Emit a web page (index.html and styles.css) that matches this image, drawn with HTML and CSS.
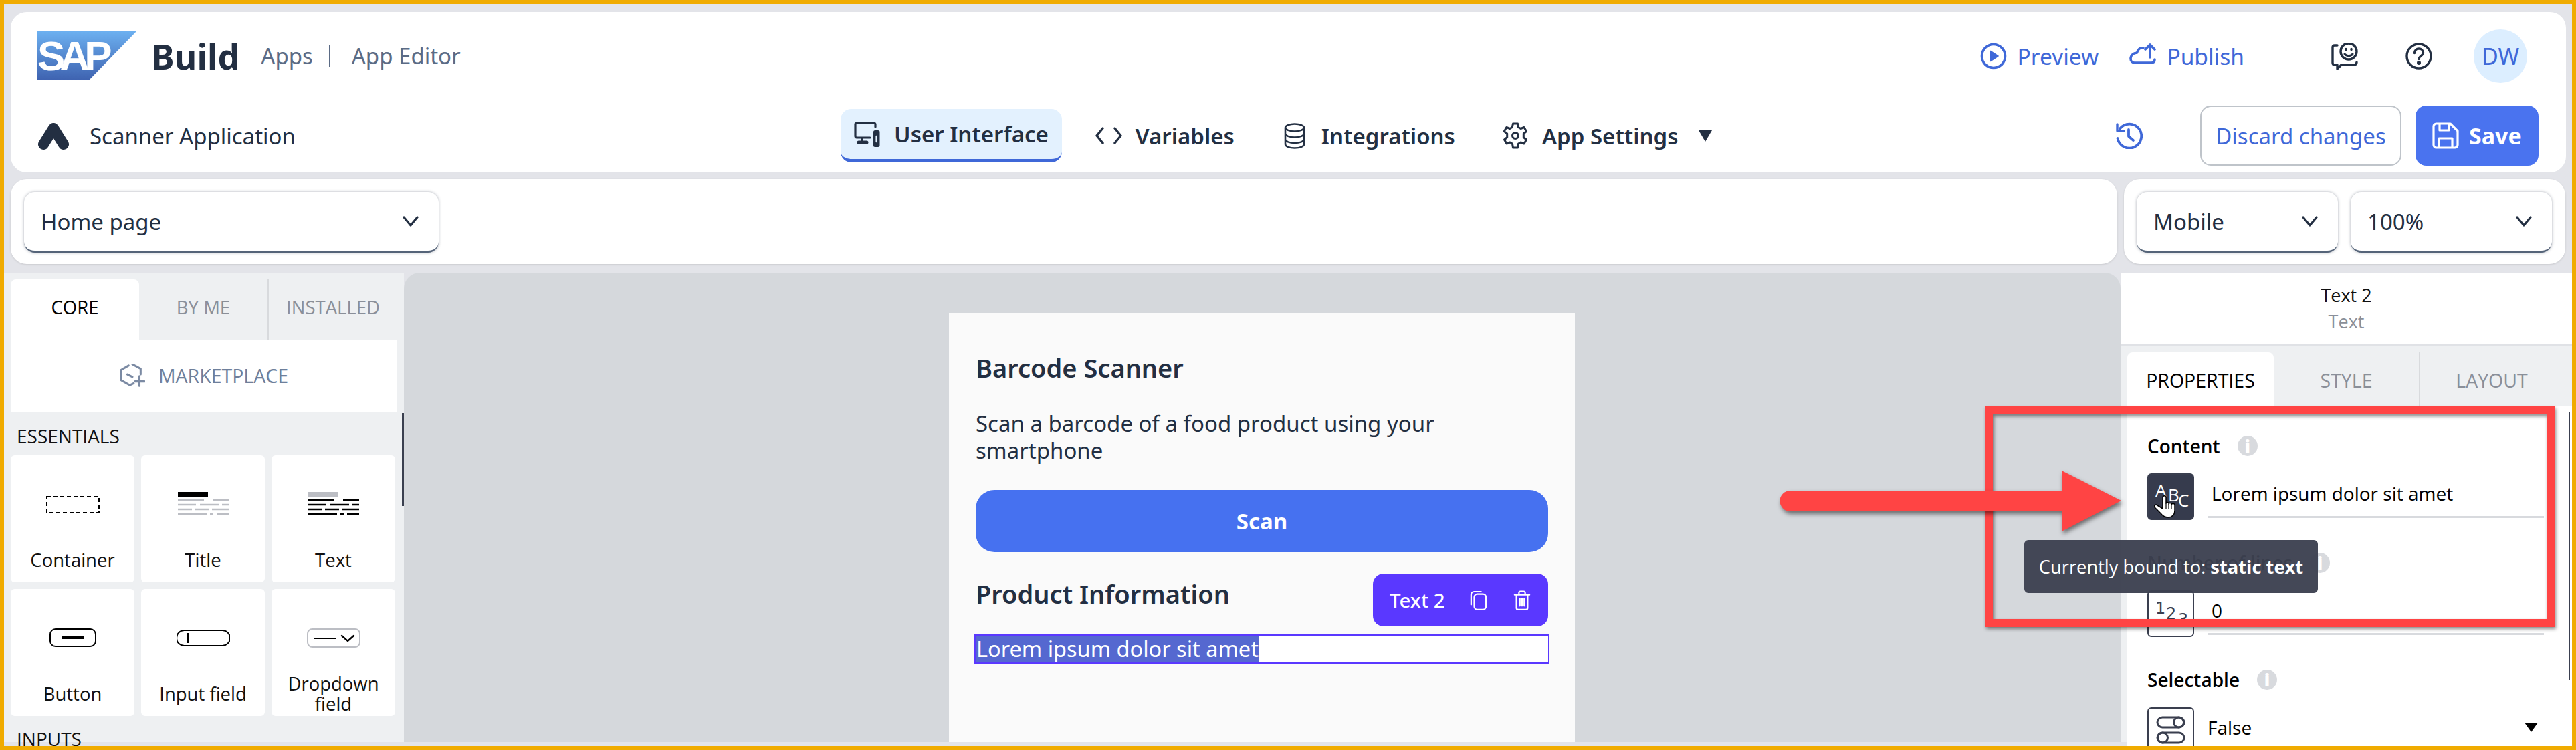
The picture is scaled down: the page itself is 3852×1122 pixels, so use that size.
FILE: index.html
```html
<!DOCTYPE html>
<html lang="en">
<head>
    <meta charset="UTF-8">
    <title>SAP Build Apps - App Editor</title>
    <link rel="stylesheet" href="styles.css">
</head>
<body>
<div class="frame">

    <!-- Header -->
    <header class="header">
        <div class="header-top">
            <div class="sap-logo"><span>SAP</span></div>
            <span class="brand">Build</span>
            <span class="crumb">Apps</span>
            <span class="crumb-sep"></span>
            <span class="crumb">App Editor</span>
            <div class="header-actions">
                <a class="link-action">
                    <svg class="icon-40" viewBox="0 0 40 40" fill="none" stroke="#3f68d8" stroke-width="3.6"><circle cx="20" cy="20" r="17.5"/><path d="M15.5 12.5v15L27 20z" fill="#3f68d8" stroke-width="1.5" stroke-linejoin="round"/></svg>
                    Preview
                </a>
                <a class="link-action publish">
                    <svg class="icon-40" viewBox="0 0 40 40" fill="none" stroke="#3f68d8" stroke-width="3.6" stroke-linecap="round" stroke-linejoin="round"><path d="M21 8c-5-1-8 2-9.500 7C6 15.500 2 19 2 24c0 4 3 6 6 6h25c4 0 5-2 5-5"/><path d="M31 22V3M24 10l7-7 7 7"/></svg>
                    Publish
                </a>
                <svg class="icon-40 chat" viewBox="0 0 40 40" fill="none" stroke="#232f42" stroke-width="3.4" stroke-linecap="round" stroke-linejoin="round"><path d="M9 4H5C3 4 2 5 2 7v23c0 2 1 3 3 3h4v6l6-6h19c3 0 4-2 4-4"/><circle cx="26" cy="13" r="12"/><path d="M20 17c3 3.500 9 3.500 12 0" stroke-width="3"/><path d="M22 9.500v1M30 9.500v1"/></svg>
                <svg class="icon-40 help" viewBox="0 0 40 40" fill="none" stroke="#232f42" stroke-width="3.4" stroke-linecap="round"><circle cx="20" cy="20" r="18"/><path d="M13.500 15.500c0-4 3-6.500 6.500-6.500s6.500 2.500 6.500 6c0 4.500-6.500 5-6.500 9.500"/><circle cx="20" cy="30" r="1.300" fill="#232f42"/></svg>
                <div class="avatar">DW</div>
            </div>
        </div>
        <div class="header-bottom">
            <div class="app-name">
                <svg class="app-logo" viewBox="0 0 48 42" fill="none" stroke="#232f42" stroke-width="16" stroke-linecap="round"><path d="M24 10L9 34M24 10l15 24"/></svg>
                Scanner Application
            </div>
            <nav class="nav">
                <a class="nav-item active">
                    <svg class="icon-40" viewBox="0 0 40 40" fill="none" stroke="#232f42" stroke-width="3.2" stroke-linecap="round" stroke-linejoin="round"><path d="M32 9V5c0-1-1-2-2-2H5C3 3 2 4 2 5v18c0 1 1 2 2 2h20"/><path d="M12 26v5"/><path d="M7 32h12" stroke-width="5"/><rect x="30" y="15" width="7.500" height="23" rx="1.500" fill="#232f42" stroke-width="2"/><path d="M33.700 23v8" stroke="#e3f1fe" stroke-width="2.500"/></svg>
                    User Interface
                </a>
                <a class="nav-item">
                    <svg class="icon-40" viewBox="0 0 40 40" fill="none" stroke="#232f42" stroke-width="3.4" stroke-linecap="round" stroke-linejoin="round"><path d="M11 9L2 20l9 11M29 9l9 11-9 11"/></svg>
                    Variables
                </a>
                <a class="nav-item">
                    <svg class="icon-40" viewBox="0 0 40 40" fill="none" stroke="#232f42" stroke-width="2.600"><ellipse cx="20" cy="8" rx="14" ry="5.500"/><path d="M6 8v25c0 3 6 5.500 14 5.500s14-2.500 14-5.500V8M6 17c0 3 6 5.500 14 5.500S34 20 34 17M6 25.500c0 3 6 5.500 14 5.500s14-2.500 14-5.500"/></svg>
                    Integrations
                </a>
                <a class="nav-item">
                    <svg class="icon-40" viewBox="0 0 40 40" fill="none" stroke="#232f42" stroke-width="3" stroke-linejoin="round"><path d="M16.500 2h7l1 5.500 3.500 2 5-2 3.500 6-4.200 3.500v5.500l4.200 3.500-3.500 6-5-2-3.500 2-1 6h-7l-1-6-3.500-2-5 2-3.500-6 4.200-3.500V17L3.300 13.500l3.500-6 5 2 3.500-2z"/><circle cx="20" cy="20" r="4.500"/></svg>
                    App Settings
                </a>
                <span class="nav-caret"></span>
            </nav>
            <div class="save-group">
                <svg class="icon-40 history" viewBox="0 0 40 40" fill="none" stroke="#3f68d8" stroke-width="3.8" stroke-linecap="round" stroke-linejoin="round"><path d="M6 9.500A18 18 0 1 1 2.500 24"/><path d="M2 3v10h10" stroke-width="3.400"/><path d="M19 11v10l7 6"/></svg>
                <button class="btn-discard">Discard changes</button>
                <button class="btn-save">
                    <svg class="icon-40" viewBox="0 0 40 40" fill="none" stroke="#fff" stroke-width="3.200" stroke-linejoin="round"><path d="M6 2h21l11 11v21c0 2-2 4-4 4H6c-2 0-4-2-4-4V6c0-2 2-4 4-4z"/><path d="M11 2v10h14V2M10 38V24h20v14"/></svg>
                    Save
                </button>
            </div>
        </div>
    </header>

    <!-- Thanh chọn trang -->
    <div class="toolbar-row">
        <div class="toolbar page-bar">
            <div class="select select-page">Home page<svg class="chevron" viewBox="0 0 24 16" fill="none" stroke="#232f42" stroke-width="3.200" stroke-linecap="round" stroke-linejoin="round"><path d="M2 2l10 12L22 2"/></svg></div>
        </div>
        <div class="toolbar view-bar">
            <div class="select select-view">Mobile<svg class="chevron" viewBox="0 0 24 16" fill="none" stroke="#232f42" stroke-width="3.200" stroke-linecap="round" stroke-linejoin="round"><path d="M2 2l10 12L22 2"/></svg></div>
            <div class="select select-view">100%<svg class="chevron" viewBox="0 0 24 16" fill="none" stroke="#232f42" stroke-width="3.200" stroke-linecap="round" stroke-linejoin="round"><path d="M2 2l10 12L22 2"/></svg></div>
        </div>
    </div>

    <div class="main">
        <!-- Cột trái -->
        <aside class="left-panel">
            <div class="left-tabs">
                <div class="tab tab-active">CORE</div>
                <div class="tab tab-mid">BY ME</div>
                <div class="tab">INSTALLED</div>
            </div>
            <div class="marketplace">
                <svg class="market-icon" viewBox="0 0 40 38" fill="none" stroke="#7b8aa3" stroke-width="3.200" stroke-linecap="round" stroke-linejoin="round"><path d="M14 3L2 10v16l14 8 6-3"/><path d="M20 1l13 7v9"/><path d="M12 17l8 4"/><path d="M31 20v15M24 28h15" stroke-width="3.400"/></svg>
                MARKETPLACE
            </div>
            <div class="section-title">ESSENTIALS</div>
            <div class="card-grid">
                <div class="card">
                    <svg class="card-icon" viewBox="0 0 80 40"><rect x="1" y="8" width="78" height="24" fill="none" stroke="#000" stroke-width="2" stroke-dasharray="6 4"/></svg>
                    <div class="card-label">Container</div>
                </div>
                <div class="card">
                    <svg class="card-icon" viewBox="0 0 80 40" fill="none" stroke="#bcbec4" stroke-width="2.400"><rect x="2" y="1" width="45" height="7" fill="#000" stroke="none"/><path d="M2 13h39M54 13h24M2 20h27M35 20h28M68 20h10M2 27h21M27 27h21M53 27h25M2 34h43M50 34h5M60 34h18"/></svg>
                    <div class="card-label">Title</div>
                </div>
                <div class="card">
                    <svg class="card-icon" viewBox="0 0 80 40" fill="none" stroke="#000" stroke-width="2.400"><rect x="2" y="1" width="45" height="7" fill="#bcbec4" stroke="none"/><path d="M2 13h39M54 13h24M2 20h27M35 20h28M68 20h10M2 27h21M27 27h21M53 27h25M2 34h43M50 34h5M60 34h18"/></svg>
                    <div class="card-label">Text</div>
                </div>
                <div class="card">
                    <svg class="card-icon" viewBox="0 0 80 40" fill="none" stroke="#000" stroke-width="2"><rect x="6" y="6" width="68" height="26" rx="8"/><path d="M23 19h34" stroke-width="4"/></svg>
                    <div class="card-label">Button</div>
                </div>
                <div class="card">
                    <svg class="card-icon" viewBox="0 0 80 40" fill="none" stroke="#000" stroke-width="2"><rect x="0" y="8" width="80" height="23" rx="11.500"/><path d="M17 12v15"/></svg>
                    <div class="card-label">Input field</div>
                </div>
                <div class="card">
                    <svg class="card-icon" viewBox="0 0 80 40" fill="none" stroke="#000" stroke-width="2"><rect x="1" y="6" width="78" height="27" rx="7" stroke="#bcbec4"/><path d="M10 20h34"/><path d="M52 16l9 8 9-8" stroke-linecap="round" stroke-width="2.400"/></svg>
                    <div class="card-label">Dropdown field</div>
                </div>
            </div>
            <div class="section-title inputs">INPUTS</div>
            <div class="left-scroll"></div>
        </aside>

        <!-- Vùng giữa -->
        <section class="canvas">
            <div class="phone">
                <h2 class="phone-title">Barcode Scanner</h2>
                <p class="phone-text">Scan a barcode of a food product using your smartphone</p>
                <div class="phone-btn">Scan</div>
                <h2 class="phone-subtitle">Product Information</h2>
                <div class="phone-selected"><span class="selected-text">Lorem ipsum dolor sit amet</span></div>
                <div class="element-bar">
                    <span>Text 2</span>
                    <svg class="bar-icon" viewBox="0 0 28 32" fill="none" stroke="#fff" stroke-width="2.400" stroke-linecap="round" stroke-linejoin="round"><rect x="7" y="6" width="19" height="25" rx="5"/><path d="M18 2H7C4 2 2 4 2 7v16"/></svg>
                    <svg class="bar-icon" viewBox="0 0 28 32" fill="none" stroke="#fff" stroke-width="2.400" stroke-linecap="round" stroke-linejoin="round"><path d="M2 7h24M5 7v21c0 2 1 3 3 3h12c2 0 3-1 3-3V7M9 7V4c0-1.500 1-2.500 2.500-2.500h5C18 1.500 19 2.500 19 4v3M10.500 13v12M14 13v12M17.500 13v12"/></svg>
                </div>
            </div>
        </section>

        <!-- Cột phải -->
        <aside class="right-panel">
            <div class="element-head">
                <div class="element-name">Text 2</div>
                <div class="element-type">Text</div>
            </div>
            <div class="right-tabs">
                <div class="rtab rtab-active">PROPERTIES</div>
                <div class="rtab rtab-mid">STYLE</div>
                <div class="rtab rtab-last">LAYOUT</div>
            </div>
            <div class="props">
                <div class="prop">
                    <div class="prop-label">Content <span class="info">i</span></div>
                    <div class="prop-row">
                        <div class="bind-box bind-dark">
                            <svg viewBox="0 0 66 66" class="bind-svg"><text x="10" y="33" class="bind-letter" fill="#fff">A</text><text x="29" y="40" class="bind-letter" fill="#fff">B</text><text x="44" y="48" class="bind-letter" fill="#fff">C</text></svg>
                        </div>
                        <div class="prop-input">Lorem ipsum dolor sit amet</div>
                    </div>
                </div>
                <div class="prop">
                    <div class="prop-label">Number of lines <span class="info">i</span></div>
                    <div class="prop-row">
                        <div class="bind-box">
                            <svg viewBox="0 0 66 66" class="bind-svg"><text x="10" y="33" class="bind-number" fill="#3a3f4f">1</text><text x="26" y="41" class="bind-number" fill="#3a3f4f">2</text><text x="44" y="50" class="bind-number" fill="#3a3f4f">3</text></svg>
                        </div>
                        <div class="prop-input">0</div>
                    </div>
                </div>
                <div class="prop">
                    <div class="prop-label">Selectable <span class="info">i</span></div>
                    <div class="prop-row">
                        <div class="bind-box">
                            <svg viewBox="0 0 66 66" class="bind-svg" fill="none" stroke="#3a3f4f" stroke-width="3"><rect x="13" y="13" width="40" height="15" rx="7.500"/><circle cx="45" cy="20.500" r="7.500"/><rect x="13" y="36" width="40" height="15" rx="7.500"/><circle cx="21" cy="43.500" r="7.500"/></svg>
                        </div>
                        <div class="prop-value">False<span class="prop-caret"></span></div>
                    </div>
                </div>
            </div>
            <div class="right-scroll"></div>
        </aside>
    </div>

    <!-- Các lớp phủ: khung đỏ, mũi tên, tooltip, con trỏ -->
    <div class="tooltip">Currently bound to: <b>static text</b></div>
    <div class="red-box"></div>
    <svg class="red-arrow" viewBox="0 0 530 110" fill="#ff4444"><path d="M18 30H424V0L513 45L424 91V61H18A15.500 15.500 0 0 1 18 30z"/></svg>
    <svg class="hand" viewBox="0 0 32 34" fill="#fff" stroke="#000" stroke-width="1.500" stroke-linejoin="round"><path d="M13 20V3c0-3 5-3 5 0v9c0-2 4-2 4 0v1c0-2 4-2 4 0v1c0-2 5-2 5 0v9c0 6-4 10-10 10-5 0-8-2-11-6L1 18c-2-3 2-5 4-3z"/><path d="M18 12v8M22 13v7M26 14v6" fill="none" stroke-width="1.200"/></svg>
</div>
</body>
</html>
```
FILE: styles.css
```css
* {
    box-sizing: border-box;
}

body {
    margin: 0;
    padding: 0;
    font-family: "Noto Sans", sans-serif;
    color: #232f42;
}

.frame {
    position: relative;
    width: 3852px;
    height: 1122px;
    padding-top: 12px;
    border: 6px solid #f0ab00;
    background-color: #e3e4e9;
    overflow: hidden;
}

.icon-40 {
    width: 40px;
    height: 40px;
    flex: none;
}

/* Header */
.header {
    height: 240px;
    margin: 0 9px 0 10px;
    background-color: #fff;
    border-radius: 24px;
}

.header-top {
    display: flex;
    align-items: center;
    height: 131px;
    padding: 0 58px 0 40px;
}

.sap-logo {
    width: 148px;
    height: 73px;
    background: linear-gradient(#6cb0f0, #3e62b0);
    clip-path: polygon(0 0, 100% 0, 52% 100%, 0 100%);
    overflow: hidden;
}

.sap-logo span {
    display: block;
    color: #fff;
    font-family: "Liberation Sans", sans-serif;
    font-size: 62px;
    font-weight: bold;
    line-height: 73px;
    letter-spacing: -8px;
}

.brand {
    margin-left: 22px;
    font-size: 52px;
    font-weight: 700;
    line-height: 60px;
}

.crumb {
    margin-left: 32px;
    color: #5b6b85;
    font-size: 33px;
}

.crumb-sep {
    width: 2px;
    height: 32px;
    margin-left: 24px;
    background-color: #5b6b85;
}

.crumb-sep + .crumb {
    margin-left: 32px;
}

.header-actions {
    display: flex;
    align-items: center;
    margin-left: auto;
}

.link-action {
    display: flex;
    align-items: center;
    gap: 16px;
    color: #3f68d8;
    font-size: 33.5px;
}

.publish {
    margin-left: 46px;
}

.chat {
    margin-left: 130px;
}

.help {
    margin-left: 71px;
}

.avatar {
    display: flex;
    align-items: center;
    justify-content: center;
    width: 80px;
    height: 80px;
    margin-left: 62px;
    border-radius: 50%;
    background-color: #dceeff;
    color: #3f68d8;
    font-size: 34px;
}

.header-bottom {
    display: grid;
    grid-template-columns: 1201px auto 1fr;
    align-items: center;
    height: 108px;
    padding: 0 41px 0 40px;
}

.app-name {
    display: flex;
    align-items: center;
    gap: 30px;
    font-size: 33px;
}

.app-logo {
    width: 48px;
    height: 42px;
}

.nav {
    display: flex;
    align-items: center;
    gap: 30px;
}

.nav-item {
    display: flex;
    align-items: center;
    gap: 20px;
    height: 80px;
    padding: 0 20px;
    font-size: 33px;
    font-weight: 600;
}

.nav-item.active {
    border-bottom: 5px solid #3f68d8;
    border-radius: 16px;
    background-color: #e3f1fe;
}

.nav-caret {
    width: 0;
    height: 0;
    margin-left: -20px;
    border-top: 17px solid #232f42;
    border-left: 10px solid transparent;
    border-right: 10px solid transparent;
}

.save-group {
    display: flex;
    align-items: center;
    justify-content: flex-end;
}

.btn-discard {
    width: 301px;
    height: 90px;
    margin-left: 86px;
    border: 2px solid #bfc4ca;
    border-radius: 16px;
    background-color: #fff;
    color: #3f68d8;
    font-family: inherit;
    font-size: 33px;
}

.btn-save {
    display: flex;
    align-items: center;
    gap: 15px;
    width: 184px;
    height: 90px;
    margin-left: 21px;
    padding: 0 25px;
    border: none;
    border-radius: 16px;
    background-color: #4a73ef;
    color: #fff;
    font-family: inherit;
    font-size: 34px;
    font-weight: 700;
}

/* Thanh chọn trang */
.toolbar-row {
    display: flex;
    gap: 10px;
    height: 127px;
    margin: 10px 10px 0;
}

.toolbar {
    display: flex;
    align-items: center;
    gap: 19px;
    height: 127px;
    padding-top: 2px;
    background-color: #fff;
    border-radius: 24px;
    box-shadow: 0 1px 3px rgba(0, 0, 0, 0.12);
}

.page-bar {
    flex: 1;
    padding-left: 20px;
}

.view-bar {
    width: 660px;
    padding-left: 19px;
}

.select {
    display: flex;
    align-items: center;
    justify-content: space-between;
    height: 91px;
    padding: 0 30px 0 25px;
    border-bottom: 3px solid #556479;
    border-radius: 16px;
    background-color: #fff;
    box-shadow: 0 0 4px rgba(50, 60, 80, 0.4);
    font-size: 33px;
}

.select-page {
    width: 620px;
}

.select-view {
    width: 301px;
}

.chevron {
    width: 24px;
    height: 16px;
}

/* Khu vực chính */
.main {
    display: flex;
    height: 702px;
    margin-top: 13px;
}

.left-panel {
    position: relative;
    width: 598px;
    padding: 10px 10px 0;
    background-color: #eef0f2;
    font-family: "Open Sans", sans-serif;
}

.left-tabs {
    display: flex;
    width: 578px;
    height: 90px;
}

.tab {
    flex: 1;
    padding-top: 23px;
    color: #8a8f99;
    font-size: 27.5px;
    text-align: center;
}

.tab-active {
    border-radius: 8px 8px 0 0;
    background-color: #fff;
    color: #000;
}

.tab-mid {
    border-right: 2px solid #d8dadd;
}

.marketplace {
    display: flex;
    align-items: center;
    justify-content: center;
    gap: 20px;
    width: 578px;
    height: 108px;
    background-color: #fff;
    color: #6e7f9b;
    font-size: 28.5px;
}

.market-icon {
    width: 38px;
    height: 36px;
}

.section-title {
    height: 65px;
    padding: 17px 0 0 9px;
    color: #111;
    font-size: 28px;
}

.inputs {
    padding-top: 15px;
}

.card-grid {
    display: grid;
    grid-template-columns: repeat(3, 185px);
    grid-template-rows: repeat(2, 190px);
    gap: 10px;
}

.card {
    display: flex;
    flex-direction: column;
    align-items: center;
    padding-top: 54px;
    border-radius: 6px;
    background-color: #fff;
}

.card-icon {
    width: 80px;
    height: 40px;
    flex: none;
}

.card-label {
    display: flex;
    align-items: center;
    height: 60px;
    margin-top: 33px;
    color: #111;
    font-size: 27.5px;
    line-height: 30px;
    text-align: center;
}

.left-scroll {
    position: absolute;
    top: 210px;
    right: 0;
    width: 3px;
    height: 139px;
    background-color: #3a3f4f;
}

.canvas {
    flex: 1;
    padding-top: 60px;
    border-radius: 24px 24px 0 0;
    background-color: #d5d8dc;
}

.phone {
    position: relative;
    width: 936px;
    height: 642px;
    margin-left: 815px;
    padding: 0 40px;
    background-color: #fafafa;
}

.phone-title {
    margin: 0;
    padding-top: 61px;
    font-size: 38px;
    font-weight: 600;
    line-height: 42px;
}

.phone-text {
    margin: 43px 0 0;
    font-size: 33px;
    line-height: 40px;
}

.phone-btn {
    display: flex;
    align-items: center;
    justify-content: center;
    height: 93px;
    margin-top: 39px;
    border-radius: 28px;
    background-color: #4671f0;
    color: #fff;
    font-size: 33px;
    font-weight: 700;
}

.phone-subtitle {
    margin: 40px 0 0;
    font-size: 38px;
    font-weight: 600;
    line-height: 44px;
}

.phone-selected {
    height: 44px;
    margin: 39px -2px 0;
    border: 2px solid #5a38ff;
    background-color: #fff;
    font-size: 32.5px;
    line-height: 40px;
}

.selected-text {
    display: inline-block;
    height: 40px;
    padding-left: 1px;
    background-color: #5568d0;
    color: #fff;
}

.element-bar {
    position: absolute;
    top: 390px;
    right: 40px;
    display: flex;
    align-items: center;
    width: 262px;
    height: 79px;
    padding-left: 25px;
    border-radius: 16px;
    background-color: #5a38ff;
    color: #fff;
    font-size: 29.5px;
    font-weight: 500;
}

.bar-icon {
    width: 26px;
    height: 30px;
    margin-left: 37px;
}

.bar-icon + .bar-icon {
    margin-left: 39px;
}

/* Cột phải */
.right-panel {
    position: relative;
    width: 675px;
    background-color: #eef0f2;
    font-family: "Open Sans", sans-serif;
}

.element-head {
    height: 109px;
    padding-top: 14px;
    background-color: #fff;
    border-bottom: 2px solid #e0e2e6;
    text-align: center;
    font-size: 27px;
    line-height: 39px;
    color: #111;
}

.element-type {
    color: #8a8f99;
}

.right-tabs {
    display: flex;
    height: 91px;
    padding: 10px 0 0 10px;
}

.rtab {
    width: 219px;
    padding-top: 23px;
    color: #8a8f99;
    font-size: 28.5px;
    text-align: center;
}

.rtab-active {
    border-radius: 8px 8px 0 0;
    background-color: #fff;
    color: #000;
}

.rtab-mid {
    border-right: 2px solid #d8dadd;
}

.rtab-last {
    padding-right: 5px;
}

.props {
    height: 510px;
    margin-left: 10px;
    padding: 41px 0 0 30px;
    background-color: #fff;
}

.prop {
    height: 175px;
}

.prop-label {
    display: flex;
    align-items: center;
    gap: 26px;
    height: 36px;
    color: #000;
    font-size: 28px;
    font-weight: 600;
}

.info {
    width: 30px;
    height: 30px;
    border-radius: 50%;
    background-color: #d8dade;
    color: #fff;
    font-size: 26px;
    font-weight: 800;
    line-height: 30px;
    text-align: center;
}

.prop-row {
    display: flex;
    margin-top: 23px;
}

.bind-box {
    width: 70px;
    height: 70px;
    flex: none;
    border: 2px solid #3a3f4f;
    border-radius: 6px;
}

.bind-dark {
    background-color: #363b4d;
}

.bind-svg {
    display: block;
    width: 66px;
    height: 66px;
}

.bind-letter {
    font-family: "Open Sans", sans-serif;
    font-size: 26px;
}

.bind-number {
    font-family: "DejaVu Sans", sans-serif;
    font-size: 24px;
}

.prop-input {
    width: 503px;
    height: 67px;
    margin-left: 20px;
    padding: 12px 0 0 6px;
    border-bottom: 3px solid #d8dade;
    color: #000;
    font-size: 28px;
    line-height: 36px;
}

.prop-value {
    display: flex;
    align-items: center;
    justify-content: space-between;
    width: 494px;
    height: 60px;
    margin-left: 20px;
    color: #000;
    font-size: 28px;
}

.prop-caret {
    width: 0;
    height: 0;
    border-top: 14px solid #000;
    border-left: 10px solid transparent;
    border-right: 10px solid transparent;
}

.right-scroll {
    position: absolute;
    top: 209px;
    right: 3px;
    width: 2px;
    height: 400px;
    background-color: #3a3f4f;
}

/* Các lớp phủ */
.tooltip {
    position: absolute;
    top: 802px;
    left: 3021px;
    width: 439px;
    height: 79px;
    border-radius: 6px;
    background-color: rgba(60, 65, 80, 0.96);
    color: #fff;
    font-family: "Open Sans", sans-serif;
    font-size: 27.3px;
    line-height: 79px;
    text-align: center;
    white-space: nowrap;
}

.red-box {
    position: absolute;
    top: 602px;
    left: 2962px;
    width: 852px;
    height: 330px;
    border: 12px solid #ff4444;
    box-shadow: 2px 3px 5px rgba(0, 0, 0, 0.45), inset 2px 3px 5px rgba(0, 0, 0, 0.45);
}

.red-arrow {
    position: absolute;
    top: 698px;
    left: 2653px;
    width: 530px;
    height: 110px;
    filter: drop-shadow(2px 4px 3px rgba(0, 0, 0, 0.5));
}

.hand {
    position: absolute;
    top: 735px;
    left: 3215px;
    width: 32px;
    height: 34px;
}
```
